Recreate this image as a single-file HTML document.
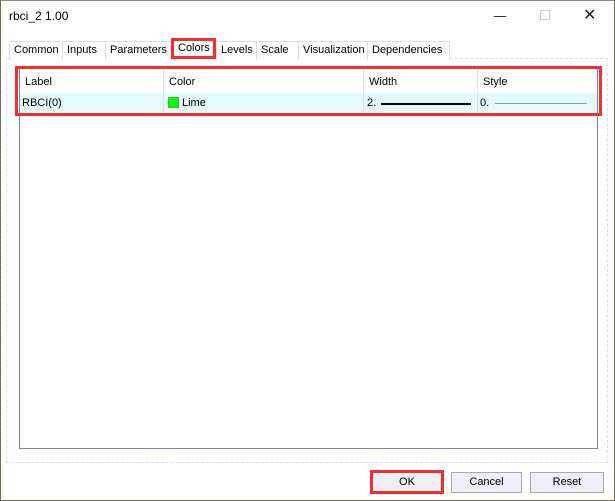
<html><head><style>
body{margin:0;width:615px;height:501px;overflow:hidden;background:#fff;font-family:"Liberation Sans",sans-serif;font-size:11px;color:#000;position:relative}
.a{position:absolute;box-sizing:border-box}
.tab{position:absolute;top:41px;height:18px;border:1px solid #dcdcf0;border-bottom:none;line-height:17px;padding-left:4px;font-size:11px;background:#fff}
</style></head><body>
<div class="a" style="left:0;top:0;width:615px;height:501px;border:1px solid #6e6e50;border-top:1px solid #888"></div>
<div class="a" style="left:9px;top:9px;font-size:12px">rbci_2 1.00</div>
<div class="a" style="left:494px;top:16px;width:12px;height:1px;background:#333"></div>
<div class="a" style="left:540px;top:10px;width:10px;height:10px;border:1px solid #ccc"></div>
<div class="a" style="left:583px;top:5px;font-size:16px;color:#222">✕</div>
<div class="a" style="left:6px;top:58px;width:602px;height:405px;border:1px dashed #dcdcf5"></div>
<div class="tab" style="left:9px;width:53px">Common</div>
<div class="tab" style="left:62px;width:43px">Inputs</div>
<div class="tab" style="left:105px;width:66px">Parameters</div>
<div class="a" style="left:171px;top:38px;width:45px;height:21px;border:3px solid #f03030;background:#fff;line-height:15px;padding-left:4px">Colors</div>
<div class="tab" style="left:216px;width:40px">Levels</div>
<div class="tab" style="left:256px;width:42px">Scale</div>
<div class="tab" style="left:298px;width:69px">Visualization</div>
<div class="tab" style="left:367px;width:77px">Dependencies</div>
<div class="a" style="left:19px;top:68px;width:579px;height:381px;border:1px solid #8080b0"></div>
<div class="a" style="left:20px;top:93px;width:577px;height:19px;background:#e2fafa"></div>
<div class="a" style="left:163px;top:70px;width:1px;height:42px;border-left:1px dotted #ccd"></div>
<div class="a" style="left:363px;top:70px;width:1px;height:42px;border-left:1px dotted #ccd"></div>
<div class="a" style="left:477px;top:70px;width:1px;height:42px;border-left:1px dotted #ccd"></div>
<div class="a" style="left:15px;top:66px;width:587px;height:50px;border:3px solid #f03030"></div>
<div class="a" style="left:25px;top:76px">Label</div>
<div class="a" style="left:169px;top:76px">Color</div>
<div class="a" style="left:369px;top:76px">Width</div>
<div class="a" style="left:483px;top:76px">Style</div>
<div class="a" style="left:22px;top:97px">RBCI(0)</div>
<div class="a" style="left:168px;top:97px;width:11px;height:11px;background:#00ff00;border:1px solid #5a5"></div>
<div class="a" style="left:182px;top:97px">Lime</div>
<div class="a" style="left:367px;top:97px">2.</div>
<div class="a" style="left:381px;top:103px;width:90px;height:2px;background:#000"></div>
<div class="a" style="left:480px;top:97px">0.</div>
<div class="a" style="left:495px;top:103px;width:92px;height:1px;background:#999"></div>
<div class="a" style="left:451px;top:472px;width:71px;height:21px;border:1px solid #aaa;background:#eeeef8;text-align:center;line-height:19px">Cancel</div>
<div class="a" style="left:530px;top:472px;width:74px;height:21px;border:1px solid #aaa;background:#eeeef8;text-align:center;line-height:19px">Reset</div>
<div class="a" style="left:370px;top:470px;width:74px;height:24px;border:3px solid #f03030;background:#eeeef8;text-align:center;line-height:18px">OK</div>
</body></html>
